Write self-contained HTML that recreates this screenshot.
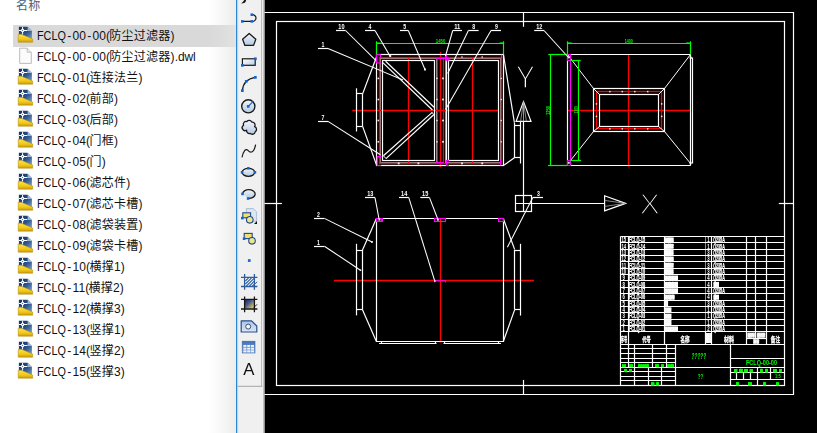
<!DOCTYPE html>
<html lang="zh-CN"><head><meta charset="utf-8"><title>FCLQ-00-00</title>
<style>
html,body{margin:0;padding:0;}
body{width:817px;height:433px;overflow:hidden;background:#fff;position:relative;font-family:"Liberation Sans","Noto Sans CJK SC",sans-serif;}
#list{position:absolute;left:0;top:0;width:236px;height:433px;background:#fff;overflow:hidden;}
#hdr{position:absolute;left:16px;top:-2px;font-size:12px;line-height:17px;color:#4c607a;letter-spacing:0.2px;}
.row{position:absolute;left:13px;width:223px;height:21px;line-height:21px;font-size:12px;color:#111;white-space:nowrap;}
.row.sel{background:#d9d9d9;height:21.5px}
.row span{position:absolute;left:24.4px;top:0.8px;letter-spacing:0.13px}
.row span i{font-style:normal;letter-spacing:0.25px}
.row span em{font-style:normal;letter-spacing:-0.15px}
.row span b{font-weight:normal;display:inline-block;transform:scaleX(0.9);transform-origin:0 50%;margin-right:-3.2px;letter-spacing:0}
.row span u{text-decoration:none;margin:0 1.2px 0 1.1px;letter-spacing:0}
.row span s{text-decoration:none;letter-spacing:-0.7px}
.ic{position:absolute;left:4px;top:0.2px;}
#fade{position:absolute;left:208px;top:0;width:28px;height:433px;background:linear-gradient(to right,rgba(229,229,229,0) 0%,rgba(229,229,229,0.3) 50%,rgba(229,229,229,0.74) 100%);}
#tb{position:absolute;left:236px;top:0;width:29px;height:433px;background:#f0f0f0;}
#cad{position:absolute;left:264.6px;top:0;width:553px;height:433px;background:#000;}
svg text{font-family:"Liberation Sans","Noto Sans CJK SC",sans-serif;}
#draw{position:absolute;left:0;top:0;will-change:transform;}
</style></head><body>
<svg width="0" height="0" style="position:absolute"><defs><linearGradient id="gb" x1="0" y1="0" x2="1" y2="1"><stop offset="0" stop-color="#142f5c"/><stop offset="0.55" stop-color="#2d558c"/><stop offset="1" stop-color="#7fa3cc"/></linearGradient><linearGradient id="gy" x1="0" y1="0" x2="0" y2="1"><stop offset="0" stop-color="#ffe14a"/><stop offset="0.6" stop-color="#f2c818"/><stop offset="1" stop-color="#c79a0a"/></linearGradient><symbol id="dwg" viewBox="0 0 17 18"><path d="M1.9 1.8 H10.6 L14.9 6 V14 H1.9 Z" fill="url(#gb)"/><path d="M10.6 1.8 L14.9 6 H10.6 Z" fill="#9db7d6"/><path d="M1.2 9.2 L4.4 9.2 L15.7 14 V17.2 H1.2 Z" fill="url(#gy)" stroke="#b08a10" stroke-width="0.5"/><g stroke="#fff" stroke-width="1" fill="none"><path d="M5.6 1.8 V9.4 M1.9 5.5 H10.4"/><circle cx="5.6" cy="5.5" r="1.3" fill="#fff"/><circle cx="5.6" cy="5.5" r="0.5" fill="#1c3a6c" stroke="none"/></g></symbol></defs></svg>
<div id="list"><div id="hdr">名称</div>
<div class="row sel" style="top:25px"><svg class="ic" width="17" height="18" viewBox="0 0 17 18"><use href="#dwg"/></svg><span><b>FCLQ</b><u>-</u>00<u>-</u>00<s>(</s><i>防尘过滤器</i>)</span></div>
<div class="row" style="top:46px"><svg class="ic" width="17" height="18" viewBox="0 0 17 18"><path d="M2.7 2.2 H10.2 L14.3 6.2 V17.4 H2.7 Z" fill="#fbfbfb" stroke="#b4b4b4" stroke-width="0.9"/><path d="M10.2 2.2 V6.2 H14.3" fill="#f0f0f0" stroke="#b4b4b4" stroke-width="0.8"/></svg><span><b>FCLQ</b><u>-</u>00<u>-</u>00<s>(</s><i>防尘过滤器</i>)<em>.dwl</em></span></div>
<div class="row" style="top:67px"><svg class="ic" width="17" height="18" viewBox="0 0 17 18"><use href="#dwg"/></svg><span><b>FCLQ</b><u>-</u>01<s>(</s><i>连接法兰</i>)</span></div>
<div class="row" style="top:88px"><svg class="ic" width="17" height="18" viewBox="0 0 17 18"><use href="#dwg"/></svg><span><b>FCLQ</b><u>-</u>02<s>(</s><i>前部</i>)</span></div>
<div class="row" style="top:109px"><svg class="ic" width="17" height="18" viewBox="0 0 17 18"><use href="#dwg"/></svg><span><b>FCLQ</b><u>-</u>03<s>(</s><i>后部</i>)</span></div>
<div class="row" style="top:130px"><svg class="ic" width="17" height="18" viewBox="0 0 17 18"><use href="#dwg"/></svg><span><b>FCLQ</b><u>-</u>04<s>(</s><i>门框</i>)</span></div>
<div class="row" style="top:151px"><svg class="ic" width="17" height="18" viewBox="0 0 17 18"><use href="#dwg"/></svg><span><b>FCLQ</b><u>-</u>05<s>(</s><i>门</i>)</span></div>
<div class="row" style="top:172px"><svg class="ic" width="17" height="18" viewBox="0 0 17 18"><use href="#dwg"/></svg><span><b>FCLQ</b><u>-</u>06<s>(</s><i>滤芯件</i>)</span></div>
<div class="row" style="top:193px"><svg class="ic" width="17" height="18" viewBox="0 0 17 18"><use href="#dwg"/></svg><span><b>FCLQ</b><u>-</u>07<s>(</s><i>滤芯卡槽</i>)</span></div>
<div class="row" style="top:214px"><svg class="ic" width="17" height="18" viewBox="0 0 17 18"><use href="#dwg"/></svg><span><b>FCLQ</b><u>-</u>08<s>(</s><i>滤袋装置</i>)</span></div>
<div class="row" style="top:235px"><svg class="ic" width="17" height="18" viewBox="0 0 17 18"><use href="#dwg"/></svg><span><b>FCLQ</b><u>-</u>09<s>(</s><i>滤袋卡槽</i>)</span></div>
<div class="row" style="top:256px"><svg class="ic" width="17" height="18" viewBox="0 0 17 18"><use href="#dwg"/></svg><span><b>FCLQ</b><u>-</u>10<s>(</s><i>横撑</i>1)</span></div>
<div class="row" style="top:277px"><svg class="ic" width="17" height="18" viewBox="0 0 17 18"><use href="#dwg"/></svg><span><b>FCLQ</b><u>-</u>11<s>(</s><i>横撑</i>2)</span></div>
<div class="row" style="top:298px"><svg class="ic" width="17" height="18" viewBox="0 0 17 18"><use href="#dwg"/></svg><span><b>FCLQ</b><u>-</u>12<s>(</s><i>横撑</i>3)</span></div>
<div class="row" style="top:319px"><svg class="ic" width="17" height="18" viewBox="0 0 17 18"><use href="#dwg"/></svg><span><b>FCLQ</b><u>-</u>13<s>(</s><i>竖撑</i>1)</span></div>
<div class="row" style="top:340px"><svg class="ic" width="17" height="18" viewBox="0 0 17 18"><use href="#dwg"/></svg><span><b>FCLQ</b><u>-</u>14<s>(</s><i>竖撑</i>2)</span></div>
<div class="row" style="top:361px"><svg class="ic" width="17" height="18" viewBox="0 0 17 18"><use href="#dwg"/></svg><span><b>FCLQ</b><u>-</u>15<s>(</s><i>竖撑</i>3)</span></div>
<div id="fade"></div>
</div>
<div id="tb"></div>
<div id="cad"></div>
<svg id="draw" width="817" height="433" viewBox="0 0 817 433">
<g id="toolbar">
<defs>
<linearGradient id="lb" x1="0" y1="0" x2="0" y2="1"><stop offset="0" stop-color="#f2f6fb"/><stop offset="1" stop-color="#b3c9e2"/></linearGradient>
<linearGradient id="lb2" x1="0" y1="0" x2="1" y2="1"><stop offset="0" stop-color="#ffffff"/><stop offset="1" stop-color="#b9cde6"/></linearGradient>
<linearGradient id="gr" x1="0" y1="0" x2="1" y2="1"><stop offset="0" stop-color="#16266e"/><stop offset="0.4" stop-color="#4a5a8a"/><stop offset="0.75" stop-color="#b9ae62"/><stop offset="1" stop-color="#f0e060"/></linearGradient>
<linearGradient id="rg" x1="0" y1="0" x2="0" y2="1"><stop offset="0" stop-color="#a9c3e8"/><stop offset="1" stop-color="#dbe6f5"/></linearGradient>
<linearGradient id="tbl" x1="0" y1="0" x2="0" y2="1"><stop offset="0" stop-color="#3f6fb5"/><stop offset="1" stop-color="#8fb0dc"/></linearGradient>
</defs>
<rect x="236" y="0" width="1.3" height="433" fill="#2b86d3"/>
<rect x="237.3" y="0" width="0.9" height="433" fill="#bcd7ee"/>
<rect x="261.3" y="0" width="1" height="386.6" fill="#a6a6a6"/>
<rect x="262.3" y="0" width="1.4" height="386.6" fill="#f4f4f4"/>
<rect x="237.5" y="385.8" width="24.8" height="1" fill="#a6a6a6"/>
<rect x="263.6" y="0" width="1.2" height="433" fill="#7a7a7a"/>
<!-- 1 partial arrow -->
<path d="M241.2 3.8 L244.4 0 L246.2 0 L245.2 2.4 Z" fill="#111"/>
<!-- 2 polyline -->
<path d="M242.3 21.4 H251.8 A3.6 3.4 0 1 0 251.8 14.7" fill="none" stroke="#1a1a1a" stroke-width="1.2"/>
<g fill="#1464d2"><rect x="241" y="20.1" width="2.6" height="2.6"/><rect x="250.5" y="20.1" width="2.6" height="2.6"/><rect x="250.5" y="13.4" width="2.6" height="2.6"/></g>
<!-- 3 polygon -->
<path d="M249.2 33.4 L255.8 39.2 L253.6 45.4 L244.9 45.4 L242.6 39.2 Z" fill="url(#lb)" stroke="#1a1a1a" stroke-width="1.3" stroke-linejoin="round"/>
<!-- 4 rectangle -->
<rect x="242.4" y="58.8" width="12.8" height="6.5" fill="url(#lb2)" stroke="#1a1a1a" stroke-width="1.2"/>
<g fill="#1464d2"><rect x="254" y="57.4" width="2.7" height="2.7"/><rect x="241" y="64" width="2.7" height="2.7"/></g>
<!-- 5 arc -->
<path d="M242.4 90.6 Q243.2 79.4 255.2 77.4" fill="none" stroke="#1a1a1a" stroke-width="1.2"/>
<g fill="#1464d2"><rect x="241" y="89.3" width="2.7" height="2.7"/><rect x="244.9" y="80" width="2.7" height="2.7"/><rect x="254" y="76" width="2.7" height="2.7"/></g>
<!-- 6 circle -->
<circle cx="248.3" cy="106.3" r="6.6" fill="url(#lb)" stroke="#1a1a1a" stroke-width="1.4"/>
<path d="M248.3 106.3 L253.2 101.4" stroke="#1464d2" stroke-width="1.2"/>
<rect x="246.9" y="105" width="2.7" height="2.7" fill="#1464d2"/>
<!-- 7 revcloud -->
<path d="M243.6 125.2 a2.6 2.6 0 0 1 3.2 -3.6 a3.1 3.1 0 0 1 5.2 0.6 a2.8 2.8 0 0 1 2.6 4.4 a2.9 2.9 0 0 1 0.6 5.2 a3 3 0 0 1 -5 1.6 a2.8 2.8 0 0 1 -3.6 -3.2 a2.8 2.8 0 0 1 -3 -5 Z" fill="url(#lb)" stroke="#1a1a1a" stroke-width="1.3" stroke-linejoin="round"/>
<!-- 8 spline -->
<path d="M242 157.4 C243.4 151 245.6 148 248 150.4 C250.6 153.4 254 153 255.6 144.6" fill="none" stroke="#1a1a1a" stroke-width="1.2"/>
<!-- 9 ellipse -->
<ellipse cx="248.4" cy="172.3" rx="6.3" ry="4" fill="url(#lb)" stroke="#1a1a1a" stroke-width="1.3"/>
<g fill="#1464d2"><rect x="240.8" y="171" width="2.6" height="2.6"/><rect x="253.6" y="171" width="2.6" height="2.6"/><rect x="247.1" y="167" width="2.6" height="2.6"/></g>
<!-- 10 ellipse arc -->
<path d="M242.6 193.6 A6.3 4.4 0 1 1 248.4 198.4" fill="url(#lb)" stroke="#1a1a1a" stroke-width="1.3"/>
<g fill="#1464d2"><rect x="241.2" y="192.6" width="2.6" height="2.6"/><rect x="246.8" y="197.2" width="2.6" height="2.6"/></g>
<!-- 11 insert block -->
<path d="M246.4 208.6 H253.2 L256.6 211.8 V221.2 H246.4 Z" fill="#dbe6f3" stroke="#9db4cf" stroke-width="0.8"/>
<rect x="242.8" y="212.8" width="7.8" height="5" fill="#f0e070" stroke="#1f4a8a" stroke-width="1.1"/>
<circle cx="249.8" cy="219.8" r="3.3" fill="#ece58a" stroke="#1f4a8a" stroke-width="1.1"/>
<rect x="241" y="216.8" width="2.6" height="2.6" fill="#1464d2"/>
<path d="M257 221 V224 H254 Z" fill="#111"/>
<!-- 12 make block -->
<rect x="244.2" y="233.4" width="8" height="5.2" fill="#f0e070" stroke="#1f4a8a" stroke-width="1.1"/>
<circle cx="252" cy="240.8" r="3.3" fill="#ece58a" stroke="#1f4a8a" stroke-width="1.1"/>
<rect x="242.8" y="237.4" width="2.6" height="2.6" fill="#1464d2"/>
<!-- 13 point -->
<rect x="247.9" y="259.2" width="2.7" height="2.7" fill="#1464d2"/>
<!-- 14 hatch -->
<rect x="245" y="277.8" width="9" height="8.4" fill="#fff"/>
<g stroke="#2c5c9e" stroke-width="1.1"><path d="M245.4 281 L248.6 277.8 M245.4 284 L251.6 277.8 M246.4 286 L254 278.4 M249.4 286 L254 281.4 M252.4 286 L254 284.4" /></g>
<g stroke="#2c5c9e" stroke-width="1.3"><path d="M244.6 274 V289.8 M254.4 274 V289.8 M241 277.4 H257.4 M241 286.5 H257.4"/></g>
<path d="M254.2 284.6 L257.2 281.8" stroke="#2c5c9e" stroke-width="1"/>
<!-- 15 gradient -->
<rect x="245" y="299.8" width="9" height="8.8" fill="url(#gr)"/>
<g stroke="#151515" stroke-width="1.3"><path d="M244.6 296.5 V312.3 M254.4 296.5 V312.3 M241 299.4 H257.4 M241 309 H257.4"/></g>
<path d="M253.8 307.6 L257 304.4" stroke="#151515" stroke-width="1"/>
<!-- 16 region -->
<path d="M241.2 320.8 H251.6 L256.8 326 V332 H241.2 Z" fill="url(#rg)" stroke="#2a4f8c" stroke-width="1.2" stroke-linejoin="round"/>
<circle cx="248.2" cy="326.6" r="2.5" fill="#f4f7fb" stroke="#3a4f70" stroke-width="1"/>
<!-- 17 table -->
<rect x="242.2" y="341.2" width="12.8" height="11.8" fill="url(#tbl)" stroke="#3865a8" stroke-width="0.6"/>
<g fill="#eef3fa"><rect x="243.4" y="345" width="3" height="1.9"/><rect x="247.2" y="345" width="3" height="1.9"/><rect x="251" y="345" width="3" height="1.9"/><rect x="243.4" y="347.7" width="3" height="1.9"/><rect x="247.2" y="347.7" width="3" height="1.9"/><rect x="251" y="347.7" width="3" height="1.9"/><rect x="243.4" y="350.4" width="3" height="1.9"/><rect x="247.2" y="350.4" width="3" height="1.9"/><rect x="251" y="350.4" width="3" height="1.9"/></g>
<!-- 18 text A -->
<text x="248.9" y="375.4" font-size="16.8" fill="#111" text-anchor="middle">A</text>

</g>
<g id="cadlines" stroke-linecap="butt">
<path d="M264.5 12.5 L793.5 12.5 L793.5 394.5 L264.5 394.5" fill="none" stroke="#fff" stroke-width="1.2"/>
<rect x="276.5" y="21.5" width="508.00" height="364.00" fill="none" stroke="#fff" stroke-width="1.2"/>
<line x1="523.5" y1="12.5" x2="523.5" y2="26.8" stroke="#fff" stroke-width="1.2"/>
<line x1="523.5" y1="379.9" x2="523.5" y2="394.4" stroke="#fff" stroke-width="1.2"/>
<line x1="264.5" y1="203.5" x2="281.9" y2="203.5" stroke="#fff" stroke-width="1.2"/>
<line x1="778.8" y1="203.5" x2="793.4" y2="203.5" stroke="#fff" stroke-width="1.2"/>
<rect x="380.5" y="58.5" width="56.00" height="104.00" fill="none" stroke="#fff" stroke-width="1" stroke-opacity="0.55"/>
<rect x="445.5" y="58.5" width="55.00" height="104.00" fill="none" stroke="#fff" stroke-width="1" stroke-opacity="0.55"/>
<rect x="379.5" y="57.5" width="122.00" height="106.00" fill="none" stroke="#ff0000" stroke-width="1.3"/>
<line x1="408.5" y1="57.5" x2="408.5" y2="163.5" stroke="#ff0000" stroke-width="1.3"/>
<line x1="472.5" y1="57.5" x2="472.5" y2="163.5" stroke="#ff0000" stroke-width="1.3"/>
<line x1="437.5" y1="57.5" x2="437.5" y2="163.5" stroke="#ff0000" stroke-width="1.1"/>
<line x1="443.5" y1="57.5" x2="443.5" y2="163.5" stroke="#ff0000" stroke-width="1.2"/>
<line x1="440.5" y1="51.9" x2="440.5" y2="167" stroke="#ff0000" stroke-width="1.3"/>
<line x1="352.2" y1="110.5" x2="499" y2="110.5" stroke="#ff0000" stroke-width="1.3"/>
<rect x="376.5" y="54.5" width="127.00" height="111.00" fill="none" stroke="#fff" stroke-width="1.2"/>
<rect x="382.5" y="60.5" width="52.00" height="100.00" fill="none" stroke="#fff" stroke-width="1.2"/>
<rect x="448.5" y="60.5" width="50.00" height="100.00" fill="none" stroke="#fff" stroke-width="1.2"/>
<line x1="446.5" y1="58" x2="446.5" y2="163" stroke="#fff" stroke-width="1.2"/>
<line x1="382.8" y1="62.6" x2="432.4" y2="110.0" stroke="#fff" stroke-width="1.2"/>
<line x1="385.6" y1="61.3" x2="434.1" y2="107.3" stroke="#fff" stroke-width="1.2"/>
<line x1="383.4" y1="155.8" x2="432.2" y2="112.4" stroke="#fff" stroke-width="1.2"/>
<line x1="386.0" y1="158.6" x2="433.7" y2="114.7" stroke="#fff" stroke-width="1.2"/>
<line x1="383.4" y1="155.8" x2="386.0" y2="158.6" stroke="#fff" stroke-width="1"/>
<line x1="432.2" y1="112.4" x2="433.7" y2="114.7" stroke="#fff" stroke-width="1"/>
<path d="M376.5 57 L362.6 93.9" fill="none" stroke="#fff" stroke-width="1.2"/>
<line x1="356.5" y1="88.3" x2="356.5" y2="131.5" stroke="#fff" stroke-width="1.2"/>
<line x1="362.5" y1="93.9" x2="362.5" y2="126.4" stroke="#fff" stroke-width="1.2"/>
<line x1="356.4" y1="93.5" x2="362.6" y2="93.5" stroke="#fff" stroke-width="1.2"/>
<line x1="356.4" y1="126.5" x2="362.6" y2="126.5" stroke="#fff" stroke-width="1.2"/>
<path d="M362.6 126.4 L376.5 164.9" fill="none" stroke="#fff" stroke-width="1.2"/>
<path d="M503.5 55 L514.4 122.7" fill="none" stroke="#fff" stroke-width="1.2"/>
<line x1="514.5" y1="122.7" x2="514.5" y2="158.0" stroke="#fff" stroke-width="1.2"/>
<line x1="520.5" y1="121.5" x2="520.5" y2="163.5" stroke="#fff" stroke-width="1.2"/>
<line x1="514.4" y1="125.5" x2="520.6" y2="125.5" stroke="#fff" stroke-width="1.2"/>
<line x1="514.4" y1="157.5" x2="520.6" y2="157.5" stroke="#fff" stroke-width="1.2"/>
<path d="M514.4 157.8 L504.6 164.7 L503.5 165.2" fill="none" stroke="#fff" stroke-width="1.2"/>
<rect x="377.5" y="77.60000000000001" width="1.60" height="1.60" fill="#fff" fill-opacity="0.9"/>
<rect x="436.3" y="77.7" width="1.40" height="1.40" fill="#fff" fill-opacity="0.9"/>
<rect x="442.1" y="77.5" width="1.80" height="1.80" fill="#fff" fill-opacity="0.9"/>
<rect x="500.55" y="77.75" width="1.30" height="1.30" fill="#fff" fill-opacity="0.9"/>
<rect x="377.5" y="98.7" width="1.60" height="1.60" fill="#fff" fill-opacity="0.9"/>
<rect x="436.3" y="98.8" width="1.40" height="1.40" fill="#fff" fill-opacity="0.9"/>
<rect x="442.1" y="98.6" width="1.80" height="1.80" fill="#fff" fill-opacity="0.9"/>
<rect x="500.55" y="98.85" width="1.30" height="1.30" fill="#fff" fill-opacity="0.9"/>
<rect x="377.5" y="119.7" width="1.60" height="1.60" fill="#fff" fill-opacity="0.9"/>
<rect x="436.3" y="119.8" width="1.40" height="1.40" fill="#fff" fill-opacity="0.9"/>
<rect x="442.1" y="119.6" width="1.80" height="1.80" fill="#fff" fill-opacity="0.9"/>
<rect x="500.55" y="119.85" width="1.30" height="1.30" fill="#fff" fill-opacity="0.9"/>
<rect x="377.5" y="141.0" width="1.60" height="1.60" fill="#fff" fill-opacity="0.9"/>
<rect x="436.3" y="141.10000000000002" width="1.40" height="1.40" fill="#fff" fill-opacity="0.9"/>
<rect x="442.1" y="140.9" width="1.80" height="1.80" fill="#fff" fill-opacity="0.9"/>
<rect x="500.55" y="141.15" width="1.30" height="1.30" fill="#fff" fill-opacity="0.9"/>
<rect x="397.8" y="162.5" width="1.80" height="1.80" fill="#fff" fill-opacity="0.9"/>
<rect x="417.5" y="162.5" width="1.80" height="1.80" fill="#fff" fill-opacity="0.9"/>
<rect x="461.1" y="162.5" width="1.80" height="1.80" fill="#fff" fill-opacity="0.9"/>
<rect x="481.3" y="162.5" width="1.80" height="1.80" fill="#fff" fill-opacity="0.9"/>
<rect x="461.3" y="56.3" width="1.40" height="1.40" fill="#fff" fill-opacity="0.9"/>
<rect x="481.5" y="56.3" width="1.40" height="1.40" fill="#fff" fill-opacity="0.9"/>
<rect x="389.2" y="55.0" width="2.00" height="2.00" fill="#fff" fill-opacity="0.9"/>
<path d="M380.5 54.5 L376.5 54.5 L376.5 63.0 L381.5 63.0" fill="none" stroke="#ff00ff" stroke-width="1.1"/>
<line x1="380.5" y1="54.5" x2="380.5" y2="58" stroke="#ff00ff" stroke-width="1"/>
<rect x="445" y="54.7" width="2.20" height="5.80" fill="#ff00ff"/>
<rect x="445" y="58" width="4.50" height="2.50" fill="#ff00ff"/>
<line x1="436.3" y1="58.5" x2="445" y2="58.5" stroke="#ff00ff" stroke-width="1.1"/>
<line x1="501.5" y1="54.7" x2="501.5" y2="58.5" stroke="#ff00ff" stroke-width="1.2"/>
<path d="M381.4 156.7 L377.3 156.7 L377.3 165.5 L381.2 165.5" fill="none" stroke="#ff00ff" stroke-width="1.2"/>
<line x1="436" y1="162.5" x2="443.6" y2="162.5" stroke="#ff00ff" stroke-width="1"/>
<line x1="446.5" y1="160.0" x2="446.5" y2="165.8" stroke="#ff00ff" stroke-width="1.3"/>
<line x1="446" y1="160.5" x2="449" y2="160.5" stroke="#ff00ff" stroke-width="1"/>
<line x1="446" y1="165.5" x2="449" y2="165.5" stroke="#ff00ff" stroke-width="1"/>
<line x1="500.5" y1="160" x2="500.5" y2="165.4" stroke="#ff00ff" stroke-width="1"/>
<line x1="376.5" y1="43.5" x2="503.6" y2="43.5" stroke="#00ff00" stroke-width="1.2"/>
<line x1="376.5" y1="41.3" x2="376.5" y2="54.4" stroke="#00ff00" stroke-width="1.2"/>
<line x1="503.5" y1="41.3" x2="503.5" y2="54.4" stroke="#00ff00" stroke-width="1.2"/>
<rect x="377" y="42.3" width="3.60" height="1.10" fill="#00ff00" fill-opacity="0.8"/>
<rect x="499.6" y="42.3" width="3.60" height="1.10" fill="#00ff00" fill-opacity="0.8"/>
<text x="440.6" y="43.2" font-size="5.4" fill="#00ff00" text-anchor="middle" textLength="9.5" lengthAdjust="spacingAndGlyphs" font-weight="bold">1450</text>
<line x1="628.5" y1="54.7" x2="628.5" y2="166.7" stroke="#ff0000" stroke-width="1.3"/>
<line x1="567.7" y1="110.5" x2="690.6" y2="110.5" stroke="#ff0000" stroke-width="1.3"/>
<rect x="596.5" y="91.5" width="65.00" height="37.00" fill="none" stroke="#ff0000" stroke-width="1.3"/>
<line x1="567.7" y1="54.5" x2="690.8" y2="54.5" stroke="#fff" stroke-width="1.2"/>
<line x1="567.7" y1="165.5" x2="690.8" y2="165.5" stroke="#fff" stroke-width="1.2"/>
<line x1="567.5" y1="54.7" x2="567.5" y2="165.3" stroke="#fff" stroke-width="1.2"/>
<line x1="690.5" y1="54.7" x2="690.5" y2="165.3" stroke="#fff" stroke-width="1.2"/>
<line x1="692.5" y1="57.5" x2="692.5" y2="163.5" stroke="#fff" stroke-width="1.2"/>
<rect x="593.5" y="88.5" width="71.00" height="43.00" fill="none" stroke="#fff" stroke-width="1.2"/>
<rect x="599.5" y="94.5" width="59.00" height="32.00" fill="none" stroke="#fff" stroke-width="1.2"/>
<path d="M567.5 54.5 L593.5 88.5 L599.5 94.5" fill="none" stroke="#fff" stroke-width="1.0"/>
<path d="M690.5 54.5 L664.5 88.5 L658.5 94.5" fill="none" stroke="#fff" stroke-width="1.0"/>
<path d="M658.5 126.5 L664.5 131.5 L690.5 163.5" fill="none" stroke="#fff" stroke-width="1.0"/>
<path d="M599.5 126.5 L593.5 131.5 L570.5 160.5" fill="none" stroke="#fff" stroke-width="1.0"/>
<rect x="609.15" y="90.85" width="1.50" height="1.50" fill="#fff" fill-opacity="0.9"/>
<rect x="609.15" y="128.15" width="1.50" height="1.50" fill="#fff" fill-opacity="0.9"/>
<rect x="621.55" y="90.85" width="1.50" height="1.50" fill="#fff" fill-opacity="0.9"/>
<rect x="621.55" y="128.15" width="1.50" height="1.50" fill="#fff" fill-opacity="0.9"/>
<rect x="634.05" y="90.85" width="1.50" height="1.50" fill="#fff" fill-opacity="0.9"/>
<rect x="634.05" y="128.15" width="1.50" height="1.50" fill="#fff" fill-opacity="0.9"/>
<rect x="646.95" y="90.85" width="1.50" height="1.50" fill="#fff" fill-opacity="0.9"/>
<rect x="646.95" y="128.15" width="1.50" height="1.50" fill="#fff" fill-opacity="0.9"/>
<rect x="595.75" y="103.15" width="1.50" height="1.50" fill="#fff" fill-opacity="0.9"/>
<rect x="660.95" y="103.15" width="1.50" height="1.50" fill="#fff" fill-opacity="0.9"/>
<rect x="595.75" y="115.65" width="1.50" height="1.50" fill="#fff" fill-opacity="0.9"/>
<rect x="660.95" y="115.65" width="1.50" height="1.50" fill="#fff" fill-opacity="0.9"/>
<line x1="570.5" y1="54.7" x2="570.5" y2="165.3" stroke="#ff00ff" stroke-width="1.2"/>
<rect x="567.5" y="54.5" width="3.00" height="6.00" fill="none" stroke="#ff00ff" stroke-width="1"/>
<rect x="567.5" y="160.5" width="3.00" height="5.00" fill="none" stroke="#ff00ff" stroke-width="1"/>
<rect x="567.9" y="56.5" width="1.80" height="1.80" fill="#fff" fill-opacity="0.9"/>
<rect x="567.9" y="161.9" width="1.80" height="1.80" fill="#fff" fill-opacity="0.9"/>
<rect x="689.6999999999999" y="56.699999999999996" width="2.20" height="2.20" fill="#fff" fill-opacity="0.9"/>
<rect x="689.5" y="161.9" width="2.20" height="2.20" fill="#fff" fill-opacity="0.9"/>
<line x1="567.4" y1="43.5" x2="690.2" y2="43.5" stroke="#00ff00" stroke-width="1.2"/>
<line x1="567.5" y1="41.3" x2="567.5" y2="54.2" stroke="#00ff00" stroke-width="1.2"/>
<line x1="690.5" y1="41.3" x2="690.5" y2="54.4" stroke="#00ff00" stroke-width="1.2"/>
<rect x="568" y="42.3" width="3.60" height="1.10" fill="#00ff00" fill-opacity="0.8"/>
<rect x="686.2" y="42.3" width="3.60" height="1.10" fill="#00ff00" fill-opacity="0.8"/>
<text x="628.7" y="43.2" font-size="5.4" fill="#00ff00" text-anchor="middle" textLength="8" lengthAdjust="spacingAndGlyphs" font-weight="bold">1400</text>
<line x1="548.3" y1="54.5" x2="567.4" y2="54.5" stroke="#00ff00" stroke-width="1.2"/>
<line x1="548.0" y1="165.5" x2="567.4" y2="165.5" stroke="#00ff00" stroke-width="1.2"/>
<line x1="550.5" y1="54.4" x2="550.5" y2="165.4" stroke="#00ff00" stroke-width="1.2"/>
<line x1="570.5" y1="60.5" x2="580.7" y2="60.5" stroke="#00ff00" stroke-width="1.2"/>
<line x1="570.5" y1="160.5" x2="581.0" y2="160.5" stroke="#00ff00" stroke-width="1.2"/>
<line x1="578.5" y1="60.3" x2="578.5" y2="160.2" stroke="#00ff00" stroke-width="1.2"/>
<text transform="translate(550.0,115) rotate(-90)" font-size="5.4" font-weight="bold" fill="#00ff00" textLength="9" lengthAdjust="spacingAndGlyphs">1250</text>
<text transform="translate(578.4,113.5) rotate(-90)" font-size="5.4" font-weight="bold" fill="#00ff00" textLength="7.5" lengthAdjust="spacingAndGlyphs">1160</text>
<line x1="440.5" y1="218.5" x2="440.5" y2="342.4" stroke="#ff0000" stroke-width="1.3"/>
<line x1="334" y1="280.5" x2="534" y2="280.5" stroke="#ff0000" stroke-width="1.3"/>
<path d="M376.5 341.5 L376.5 218.5 L503.5 218.5 L503.5 341.5 Z" fill="none" stroke="#fff" stroke-width="1.2"/>
<line x1="379" y1="343.5" x2="436.5" y2="343.5" stroke="#fff" stroke-width="1.2"/>
<line x1="443.5" y1="343.5" x2="501" y2="343.5" stroke="#fff" stroke-width="1.2"/>
<line x1="381.5" y1="341.5" x2="381.5" y2="343.5" stroke="#fff" stroke-width="1.2"/>
<line x1="498.5" y1="341.5" x2="498.5" y2="343.5" stroke="#fff" stroke-width="1.2"/>
<line x1="435.5" y1="341.5" x2="435.5" y2="343.5" stroke="#fff" stroke-width="1.2"/>
<line x1="444.5" y1="341.5" x2="444.5" y2="343.5" stroke="#fff" stroke-width="1.2"/>
<path d="M376.3 218.8 L362.5 250.0" fill="none" stroke="#fff" stroke-width="1.2"/>
<line x1="356.5" y1="243.8" x2="356.5" y2="315.4" stroke="#fff" stroke-width="1.2"/>
<line x1="362.5" y1="250" x2="362.5" y2="309.6" stroke="#fff" stroke-width="1.2"/>
<line x1="356.4" y1="250.5" x2="362.4" y2="250.5" stroke="#fff" stroke-width="1.2"/>
<line x1="356.4" y1="309.5" x2="362.4" y2="309.5" stroke="#fff" stroke-width="1.2"/>
<path d="M362.4 309.6 L376.3 341.2" fill="none" stroke="#fff" stroke-width="1.2"/>
<path d="M503.4 218.8 L514.7 249.6" fill="none" stroke="#fff" stroke-width="1.2"/>
<line x1="514.5" y1="250" x2="514.5" y2="309.6" stroke="#fff" stroke-width="1.2"/>
<line x1="520.5" y1="243.8" x2="520.5" y2="315.6" stroke="#fff" stroke-width="1.2"/>
<line x1="514.7" y1="250.5" x2="520.6" y2="250.5" stroke="#fff" stroke-width="1.2"/>
<line x1="514.7" y1="309.5" x2="520.6" y2="309.5" stroke="#fff" stroke-width="1.2"/>
<path d="M514.7 309.6 L503.4 341.2" fill="none" stroke="#fff" stroke-width="1.2"/>
<rect x="376.5" y="218.5" width="5.00" height="3.00" fill="none" stroke="#ff00ff" stroke-width="1.1"/>
<line x1="382.5" y1="218" x2="382.5" y2="222" stroke="#ff00ff" stroke-width="1"/>
<rect x="434.5" y="218.5" width="11.00" height="3.00" fill="none" stroke="#ff00ff" stroke-width="1.1"/>
<rect x="498.5" y="218.5" width="5.00" height="3.00" fill="none" stroke="#ff00ff" stroke-width="1.1"/>
<path d="M434.7 282.4 L434.7 280.8 L445.6 280.8 L445.6 282.4" fill="none" stroke="#ff00ff" stroke-width="1"/>
<rect x="378.4" y="218.6" width="2.00" height="2.00" fill="#fff" fill-opacity="0.9"/>
<rect x="437.1" y="218.9" width="1.80" height="1.80" fill="#fff" fill-opacity="0.9"/>
<rect x="434.0" y="280.2" width="1.60" height="1.60" fill="#fff" fill-opacity="0.9"/>
<rect x="515.5" y="195.5" width="16.00" height="16.00" fill="none" stroke="#fff" stroke-width="1.2"/>
<line x1="523.5" y1="121.3" x2="523.5" y2="211.6" stroke="#fff" stroke-width="1.2"/>
<line x1="515" y1="203.5" x2="604.6" y2="203.5" stroke="#fff" stroke-width="1.2"/>
<path d="M523.5 101.6 L516.1 121.3 L531.0 121.3 Z" fill="none" stroke="#fff" stroke-width="1.2"/>
<line x1="523.5" y1="101.6" x2="520.6" y2="121.3" stroke="#aaa" stroke-width="0.8"/>
<line x1="523.5" y1="101.6" x2="526.4" y2="121.3" stroke="#aaa" stroke-width="0.8"/>
<line x1="523.5" y1="101.6" x2="523.5" y2="121.3" stroke="#bbb" stroke-width="0.8"/>
<path d="M625.5 203.4 L604.6 195.8 L604.6 210.8 Z" fill="none" stroke="#fff" stroke-width="1.2"/>
<line x1="625.5" y1="203.4" x2="604.6" y2="200.4" stroke="#aaa" stroke-width="0.8"/>
<line x1="625.5" y1="203.4" x2="604.6" y2="206.4" stroke="#aaa" stroke-width="0.8"/>
<text x="525.4" y="88.3" font-size="31" fill="#fff" stroke="#000" stroke-width="1.5" paint-order="fill stroke" text-anchor="middle" textLength="19.3" lengthAdjust="spacingAndGlyphs">Y</text>
<text x="649.8" y="214.4" font-size="29.4" fill="#fff" stroke="#000" stroke-width="1.5" paint-order="fill stroke" text-anchor="middle" textLength="20.5" lengthAdjust="spacingAndGlyphs">X</text>
<text x="341.4" y="29.0" font-size="6.9" fill="#fff" text-anchor="middle" textLength="6.2" lengthAdjust="spacingAndGlyphs" font-weight="bold">10</text>
<line x1="336" y1="30.5" x2="345.6" y2="30.5" stroke="#fff" stroke-width="1.2"/>
<line x1="345.6" y1="30.5" x2="375.8" y2="60.4" stroke="#fff" stroke-width="1.05"/>
<text x="370" y="29.0" font-size="6.9" fill="#fff" text-anchor="middle" textLength="2.9" lengthAdjust="spacingAndGlyphs" font-weight="bold">4</text>
<line x1="365" y1="30.5" x2="375" y2="30.5" stroke="#fff" stroke-width="1.2"/>
<line x1="375" y1="30.5" x2="390" y2="56" stroke="#fff" stroke-width="1.05"/>
<text x="404.6" y="29.0" font-size="6.9" fill="#fff" text-anchor="middle" textLength="2.9" lengthAdjust="spacingAndGlyphs" font-weight="bold">5</text>
<line x1="400" y1="30.5" x2="408.3" y2="30.5" stroke="#fff" stroke-width="1.2"/>
<line x1="408.3" y1="30.5" x2="425" y2="69.5" stroke="#fff" stroke-width="1.05"/>
<rect x="424.0" y="68.5" width="2.00" height="2.00" fill="#fff" fill-opacity="0.9"/>
<text x="457.3" y="29.0" font-size="6.9" fill="#fff" text-anchor="middle" textLength="6.2" lengthAdjust="spacingAndGlyphs" font-weight="bold">11</text>
<line x1="452.7" y1="30.5" x2="462" y2="30.5" stroke="#fff" stroke-width="1.2"/>
<line x1="452.7" y1="30.5" x2="445.5" y2="56" stroke="#fff" stroke-width="1.05"/>
<text x="473.6" y="29.0" font-size="6.9" fill="#fff" text-anchor="middle" textLength="2.9" lengthAdjust="spacingAndGlyphs" font-weight="bold">8</text>
<line x1="468.4" y1="30.5" x2="478.6" y2="30.5" stroke="#fff" stroke-width="1.2"/>
<line x1="468.4" y1="30.5" x2="447.7" y2="73.6" stroke="#fff" stroke-width="1.05"/>
<text x="496.4" y="29.0" font-size="6.9" fill="#fff" text-anchor="middle" textLength="2.9" lengthAdjust="spacingAndGlyphs" font-weight="bold">9</text>
<line x1="491" y1="30.5" x2="501" y2="30.5" stroke="#fff" stroke-width="1.2"/>
<line x1="491" y1="30.5" x2="445.5" y2="109.4" stroke="#fff" stroke-width="1.05"/>
<text x="539.3" y="29.0" font-size="6.9" fill="#fff" text-anchor="middle" textLength="6.2" lengthAdjust="spacingAndGlyphs" font-weight="bold">12</text>
<line x1="534.2" y1="30.5" x2="544" y2="30.5" stroke="#fff" stroke-width="1.2"/>
<line x1="544" y1="30.5" x2="568" y2="57" stroke="#fff" stroke-width="1.05"/>
<text x="323" y="47.1" font-size="6.9" fill="#fff" text-anchor="middle" textLength="2.9" lengthAdjust="spacingAndGlyphs" font-weight="bold">1</text>
<line x1="318" y1="48.5" x2="328" y2="48.5" stroke="#fff" stroke-width="1.2"/>
<line x1="328" y1="48.6" x2="403" y2="80" stroke="#fff" stroke-width="1.05"/>
<text x="323" y="119.9" font-size="6.9" fill="#fff" text-anchor="middle" textLength="2.9" lengthAdjust="spacingAndGlyphs" font-weight="bold">7</text>
<line x1="318" y1="121.5" x2="328" y2="121.5" stroke="#fff" stroke-width="1.2"/>
<line x1="328" y1="121.4" x2="380.4" y2="154.7" stroke="#fff" stroke-width="1.05"/>
<text x="370.3" y="196.1" font-size="6.9" fill="#fff" text-anchor="middle" textLength="6.2" lengthAdjust="spacingAndGlyphs" font-weight="bold">13</text>
<line x1="365" y1="197.5" x2="375" y2="197.5" stroke="#fff" stroke-width="1.2"/>
<line x1="375" y1="197.6" x2="379" y2="218.8" stroke="#fff" stroke-width="1.05"/>
<text x="404.2" y="196.1" font-size="6.9" fill="#fff" text-anchor="middle" textLength="6.2" lengthAdjust="spacingAndGlyphs" font-weight="bold">14</text>
<line x1="399" y1="197.5" x2="408.8" y2="197.5" stroke="#fff" stroke-width="1.2"/>
<line x1="408.8" y1="197.6" x2="434.6" y2="280.5" stroke="#fff" stroke-width="1.05"/>
<text x="425.2" y="196.1" font-size="6.9" fill="#fff" text-anchor="middle" textLength="6.2" lengthAdjust="spacingAndGlyphs" font-weight="bold">15</text>
<line x1="420.3" y1="197.5" x2="429.5" y2="197.5" stroke="#fff" stroke-width="1.2"/>
<line x1="429.5" y1="197.6" x2="438" y2="219.7" stroke="#fff" stroke-width="1.05"/>
<text x="318.5" y="216.9" font-size="6.9" fill="#fff" text-anchor="middle" textLength="2.9" lengthAdjust="spacingAndGlyphs" font-weight="bold">2</text>
<line x1="314" y1="218.5" x2="324.4" y2="218.5" stroke="#fff" stroke-width="1.2"/>
<line x1="324.4" y1="218.4" x2="372" y2="242" stroke="#fff" stroke-width="1.05"/>
<rect x="371.1" y="241.1" width="1.80" height="1.80" fill="#fff" fill-opacity="0.9"/>
<text x="318.5" y="244.7" font-size="6.9" fill="#fff" text-anchor="middle" textLength="2.9" lengthAdjust="spacingAndGlyphs" font-weight="bold">1</text>
<line x1="314" y1="246.5" x2="324.4" y2="246.5" stroke="#fff" stroke-width="1.2"/>
<line x1="324.4" y1="246.2" x2="360.5" y2="270.3" stroke="#fff" stroke-width="1.05"/>
<rect x="359.75" y="269.55" width="1.50" height="1.50" fill="#fff" fill-opacity="0.9"/>
<text x="538.4" y="195.9" font-size="6.9" fill="#fff" text-anchor="middle" textLength="2.9" lengthAdjust="spacingAndGlyphs" font-weight="bold">3</text>
<line x1="532.8" y1="197.5" x2="543" y2="197.5" stroke="#fff" stroke-width="1.2"/>
<line x1="532.8" y1="197.4" x2="507.4" y2="247.3" stroke="#fff" stroke-width="1.05"/>
</g>
<g id="titleblock">
<line x1="620.5" y1="236.5" x2="784.5" y2="236.5" stroke="#fff" stroke-width="1.2"/>
<line x1="620.5" y1="242.5" x2="784.5" y2="242.5" stroke="#fff" stroke-width="1.2"/>
<line x1="620.5" y1="249.5" x2="784.5" y2="249.5" stroke="#fff" stroke-width="1.2"/>
<line x1="620.5" y1="255.5" x2="784.5" y2="255.5" stroke="#fff" stroke-width="1.2"/>
<line x1="620.5" y1="261.5" x2="784.5" y2="261.5" stroke="#fff" stroke-width="1.2"/>
<line x1="620.5" y1="268.5" x2="784.5" y2="268.5" stroke="#fff" stroke-width="1.2"/>
<line x1="620.5" y1="274.5" x2="784.5" y2="274.5" stroke="#fff" stroke-width="1.2"/>
<line x1="620.5" y1="280.5" x2="784.5" y2="280.5" stroke="#fff" stroke-width="1.2"/>
<line x1="620.5" y1="287.5" x2="784.5" y2="287.5" stroke="#fff" stroke-width="1.2"/>
<line x1="620.5" y1="293.5" x2="784.5" y2="293.5" stroke="#fff" stroke-width="1.2"/>
<line x1="620.5" y1="300.5" x2="784.5" y2="300.5" stroke="#fff" stroke-width="1.2"/>
<line x1="620.5" y1="306.5" x2="784.5" y2="306.5" stroke="#fff" stroke-width="1.2"/>
<line x1="620.5" y1="312.5" x2="784.5" y2="312.5" stroke="#fff" stroke-width="1.2"/>
<line x1="620.5" y1="319.5" x2="784.5" y2="319.5" stroke="#fff" stroke-width="1.2"/>
<line x1="620.5" y1="325.5" x2="784.5" y2="325.5" stroke="#fff" stroke-width="1.2"/>
<line x1="620.5" y1="331.5" x2="784.5" y2="331.5" stroke="#fff" stroke-width="1.2"/>
<line x1="620.5" y1="344.5" x2="784.5" y2="344.5" stroke="#fff" stroke-width="1.2"/>
<line x1="620.5" y1="236.45" x2="620.5" y2="344.2" stroke="#fff" stroke-width="1.2"/>
<line x1="628.5" y1="236.45" x2="628.5" y2="344.2" stroke="#fff" stroke-width="1.2"/>
<line x1="664.5" y1="236.45" x2="664.5" y2="344.2" stroke="#fff" stroke-width="1.2"/>
<line x1="705.5" y1="236.45" x2="705.5" y2="331.85" stroke="#fff" stroke-width="1" stroke-opacity="0.55"/>
<line x1="705.5" y1="331.85" x2="705.5" y2="344.2" stroke="#fff" stroke-width="1.2"/>
<line x1="711.5" y1="236.45" x2="711.5" y2="344.2" stroke="#fff" stroke-width="1.2"/>
<line x1="746.5" y1="236.45" x2="746.5" y2="344.2" stroke="#fff" stroke-width="1.2"/>
<line x1="755.5" y1="236.45" x2="755.5" y2="338.5" stroke="#fff" stroke-width="1.2"/>
<line x1="766.5" y1="236.45" x2="766.5" y2="344.2" stroke="#fff" stroke-width="1.2"/>
<line x1="746.5" y1="338.5" x2="766.2" y2="338.5" stroke="#fff" stroke-width="1.2"/>
<text x="623.8" y="242.14999999999998" font-size="6.3" fill="#fff" text-anchor="middle" textLength="4.8" lengthAdjust="spacingAndGlyphs" font-weight="bold">15</text>
<text x="628.9" y="242.14999999999998" font-size="6.3" fill="#fff" text-anchor="start" textLength="16.2" lengthAdjust="spacingAndGlyphs" font-weight="bold" stroke="#fff" stroke-width="0.25">FCLQ-15</text>
<rect x="664.6" y="237.35" width="9.00" height="5.10" fill="#fff" fill-opacity="0.96"/>
<text x="664.6" y="241.64999999999998" font-size="4.6" fill="#fff" text-anchor="start" textLength="9.0" lengthAdjust="spacingAndGlyphs" font-weight="bold">竖撑3</text>
<text x="708.4" y="242.14999999999998" font-size="6.3" fill="#fff" text-anchor="middle" textLength="2.4" lengthAdjust="spacingAndGlyphs" font-weight="bold">1</text>
<text x="713.2" y="242.14999999999998" font-size="6.3" fill="#fff" text-anchor="start" textLength="11.6" lengthAdjust="spacingAndGlyphs" font-weight="bold" stroke="#fff" stroke-width="0.25">Q235A</text>
<text x="623.8" y="248.51" font-size="6.3" fill="#fff" text-anchor="middle" textLength="4.8" lengthAdjust="spacingAndGlyphs" font-weight="bold">14</text>
<text x="628.9" y="248.51" font-size="6.3" fill="#fff" text-anchor="start" textLength="16.2" lengthAdjust="spacingAndGlyphs" font-weight="bold" stroke="#fff" stroke-width="0.25">FCLQ-14</text>
<rect x="664.6" y="243.71" width="9.00" height="5.10" fill="#fff" fill-opacity="0.96"/>
<text x="664.6" y="248.01" font-size="4.6" fill="#fff" text-anchor="start" textLength="9.0" lengthAdjust="spacingAndGlyphs" font-weight="bold">竖撑2</text>
<text x="708.4" y="248.51" font-size="6.3" fill="#fff" text-anchor="middle" textLength="2.4" lengthAdjust="spacingAndGlyphs" font-weight="bold">1</text>
<text x="713.2" y="248.51" font-size="6.3" fill="#fff" text-anchor="start" textLength="11.6" lengthAdjust="spacingAndGlyphs" font-weight="bold" stroke="#fff" stroke-width="0.25">Q235A</text>
<text x="623.8" y="254.86999999999998" font-size="6.3" fill="#fff" text-anchor="middle" textLength="4.8" lengthAdjust="spacingAndGlyphs" font-weight="bold">13</text>
<text x="628.9" y="254.86999999999998" font-size="6.3" fill="#fff" text-anchor="start" textLength="16.2" lengthAdjust="spacingAndGlyphs" font-weight="bold" stroke="#fff" stroke-width="0.25">FCLQ-13</text>
<rect x="664.6" y="250.07" width="9.00" height="5.10" fill="#fff" fill-opacity="0.96"/>
<text x="664.6" y="254.36999999999998" font-size="4.6" fill="#fff" text-anchor="start" textLength="9.0" lengthAdjust="spacingAndGlyphs" font-weight="bold">竖撑1</text>
<text x="708.4" y="254.86999999999998" font-size="6.3" fill="#fff" text-anchor="middle" textLength="2.4" lengthAdjust="spacingAndGlyphs" font-weight="bold">3</text>
<text x="713.2" y="254.86999999999998" font-size="6.3" fill="#fff" text-anchor="start" textLength="11.6" lengthAdjust="spacingAndGlyphs" font-weight="bold" stroke="#fff" stroke-width="0.25">Q235A</text>
<text x="623.8" y="261.23" font-size="6.3" fill="#fff" text-anchor="middle" textLength="4.8" lengthAdjust="spacingAndGlyphs" font-weight="bold">12</text>
<text x="628.9" y="261.23" font-size="6.3" fill="#fff" text-anchor="start" textLength="16.2" lengthAdjust="spacingAndGlyphs" font-weight="bold" stroke="#fff" stroke-width="0.25">FCLQ-12</text>
<rect x="664.6" y="256.43" width="9.00" height="5.10" fill="#fff" fill-opacity="0.96"/>
<text x="664.6" y="260.73" font-size="4.6" fill="#fff" text-anchor="start" textLength="9.0" lengthAdjust="spacingAndGlyphs" font-weight="bold">横撑3</text>
<text x="708.4" y="261.23" font-size="6.3" fill="#fff" text-anchor="middle" textLength="2.4" lengthAdjust="spacingAndGlyphs" font-weight="bold">3</text>
<text x="713.2" y="261.23" font-size="6.3" fill="#fff" text-anchor="start" textLength="11.6" lengthAdjust="spacingAndGlyphs" font-weight="bold" stroke="#fff" stroke-width="0.25">Q235A</text>
<text x="623.8" y="267.59" font-size="6.3" fill="#fff" text-anchor="middle" textLength="4.8" lengthAdjust="spacingAndGlyphs" font-weight="bold">11</text>
<text x="628.9" y="267.59" font-size="6.3" fill="#fff" text-anchor="start" textLength="16.2" lengthAdjust="spacingAndGlyphs" font-weight="bold" stroke="#fff" stroke-width="0.25">FCLQ-11</text>
<rect x="664.6" y="262.78999999999996" width="9.00" height="5.10" fill="#fff" fill-opacity="0.96"/>
<text x="664.6" y="267.09" font-size="4.6" fill="#fff" text-anchor="start" textLength="9.0" lengthAdjust="spacingAndGlyphs" font-weight="bold">横撑2</text>
<text x="708.4" y="267.59" font-size="6.3" fill="#fff" text-anchor="middle" textLength="2.4" lengthAdjust="spacingAndGlyphs" font-weight="bold">3</text>
<text x="713.2" y="267.59" font-size="6.3" fill="#fff" text-anchor="start" textLength="11.6" lengthAdjust="spacingAndGlyphs" font-weight="bold" stroke="#fff" stroke-width="0.25">Q235A</text>
<text x="623.8" y="273.95" font-size="6.3" fill="#fff" text-anchor="middle" textLength="4.8" lengthAdjust="spacingAndGlyphs" font-weight="bold">10</text>
<text x="628.9" y="273.95" font-size="6.3" fill="#fff" text-anchor="start" textLength="16.2" lengthAdjust="spacingAndGlyphs" font-weight="bold" stroke="#fff" stroke-width="0.25">FCLQ-10</text>
<rect x="664.6" y="269.15" width="9.00" height="5.10" fill="#fff" fill-opacity="0.96"/>
<text x="664.6" y="273.45" font-size="4.6" fill="#fff" text-anchor="start" textLength="9.0" lengthAdjust="spacingAndGlyphs" font-weight="bold">横撑1</text>
<text x="708.4" y="273.95" font-size="6.3" fill="#fff" text-anchor="middle" textLength="2.4" lengthAdjust="spacingAndGlyphs" font-weight="bold">3</text>
<text x="713.2" y="273.95" font-size="6.3" fill="#fff" text-anchor="start" textLength="11.6" lengthAdjust="spacingAndGlyphs" font-weight="bold" stroke="#fff" stroke-width="0.25">Q235A</text>
<text x="623.8" y="280.31" font-size="6.3" fill="#fff" text-anchor="middle" textLength="2.4" lengthAdjust="spacingAndGlyphs" font-weight="bold">9</text>
<text x="628.9" y="280.31" font-size="6.3" fill="#fff" text-anchor="start" textLength="16.2" lengthAdjust="spacingAndGlyphs" font-weight="bold" stroke="#fff" stroke-width="0.25">FCLQ-09</text>
<rect x="664.6" y="275.51" width="13.40" height="5.10" fill="#fff" fill-opacity="0.96"/>
<text x="664.6" y="279.81" font-size="4.6" fill="#fff" text-anchor="start" textLength="13.4" lengthAdjust="spacingAndGlyphs" font-weight="bold">滤袋卡槽</text>
<text x="708.4" y="280.31" font-size="6.3" fill="#fff" text-anchor="middle" textLength="2.4" lengthAdjust="spacingAndGlyphs" font-weight="bold">4</text>
<text x="713.2" y="280.31" font-size="6.3" fill="#fff" text-anchor="start" textLength="11.6" lengthAdjust="spacingAndGlyphs" font-weight="bold" stroke="#fff" stroke-width="0.25">Q235A</text>
<text x="623.8" y="286.66999999999996" font-size="6.3" fill="#fff" text-anchor="middle" textLength="2.4" lengthAdjust="spacingAndGlyphs" font-weight="bold">8</text>
<text x="628.9" y="286.66999999999996" font-size="6.3" fill="#fff" text-anchor="start" textLength="16.2" lengthAdjust="spacingAndGlyphs" font-weight="bold" stroke="#fff" stroke-width="0.25">FCLQ-08</text>
<rect x="664.6" y="281.86999999999995" width="13.40" height="5.10" fill="#fff" fill-opacity="0.96"/>
<text x="664.6" y="286.16999999999996" font-size="4.6" fill="#fff" text-anchor="start" textLength="13.4" lengthAdjust="spacingAndGlyphs" font-weight="bold">滤袋装置</text>
<text x="708.4" y="286.66999999999996" font-size="6.3" fill="#fff" text-anchor="middle" textLength="2.4" lengthAdjust="spacingAndGlyphs" font-weight="bold">4</text>
<rect x="713.4" y="281.96999999999997" width="5.60" height="5.00" fill="#fff" fill-opacity="0.96"/>
<text x="713.4" y="286.16999999999996" font-size="4.6" fill="#fff" text-anchor="start" textLength="5.6" lengthAdjust="spacingAndGlyphs" font-weight="bold">组件</text>
<text x="623.8" y="293.03" font-size="6.3" fill="#fff" text-anchor="middle" textLength="2.4" lengthAdjust="spacingAndGlyphs" font-weight="bold">7</text>
<text x="628.9" y="293.03" font-size="6.3" fill="#fff" text-anchor="start" textLength="16.2" lengthAdjust="spacingAndGlyphs" font-weight="bold" stroke="#fff" stroke-width="0.25">FCLQ-07</text>
<rect x="664.6" y="288.22999999999996" width="13.40" height="5.10" fill="#fff" fill-opacity="0.96"/>
<text x="664.6" y="292.53" font-size="4.6" fill="#fff" text-anchor="start" textLength="13.4" lengthAdjust="spacingAndGlyphs" font-weight="bold">滤芯卡槽</text>
<text x="708.4" y="293.03" font-size="6.3" fill="#fff" text-anchor="middle" textLength="2.4" lengthAdjust="spacingAndGlyphs" font-weight="bold">4</text>
<text x="713.2" y="293.03" font-size="6.3" fill="#fff" text-anchor="start" textLength="11.6" lengthAdjust="spacingAndGlyphs" font-weight="bold" stroke="#fff" stroke-width="0.25">Q235A</text>
<text x="623.8" y="299.39" font-size="6.3" fill="#fff" text-anchor="middle" textLength="2.4" lengthAdjust="spacingAndGlyphs" font-weight="bold">6</text>
<text x="628.9" y="299.39" font-size="6.3" fill="#fff" text-anchor="start" textLength="16.2" lengthAdjust="spacingAndGlyphs" font-weight="bold" stroke="#fff" stroke-width="0.25">FCLQ-06</text>
<rect x="664.6" y="294.59" width="10.10" height="5.10" fill="#fff" fill-opacity="0.96"/>
<text x="664.6" y="298.89" font-size="4.6" fill="#fff" text-anchor="start" textLength="10.1" lengthAdjust="spacingAndGlyphs" font-weight="bold">滤芯件</text>
<text x="708.4" y="299.39" font-size="6.3" fill="#fff" text-anchor="middle" textLength="2.4" lengthAdjust="spacingAndGlyphs" font-weight="bold">4</text>
<rect x="713.4" y="294.69" width="5.60" height="5.00" fill="#fff" fill-opacity="0.96"/>
<text x="713.4" y="298.89" font-size="4.6" fill="#fff" text-anchor="start" textLength="5.6" lengthAdjust="spacingAndGlyphs" font-weight="bold">组件</text>
<text x="623.8" y="305.75" font-size="6.3" fill="#fff" text-anchor="middle" textLength="2.4" lengthAdjust="spacingAndGlyphs" font-weight="bold">5</text>
<text x="628.9" y="305.75" font-size="6.3" fill="#fff" text-anchor="start" textLength="16.2" lengthAdjust="spacingAndGlyphs" font-weight="bold" stroke="#fff" stroke-width="0.25">FCLQ-05</text>
<rect x="664.6" y="300.95" width="3.50" height="5.10" fill="#fff" fill-opacity="0.96"/>
<text x="664.6" y="305.25" font-size="4.6" fill="#fff" text-anchor="start" textLength="3.5" lengthAdjust="spacingAndGlyphs" font-weight="bold">门</text>
<text x="708.4" y="305.75" font-size="6.3" fill="#fff" text-anchor="middle" textLength="2.4" lengthAdjust="spacingAndGlyphs" font-weight="bold">3</text>
<text x="713.2" y="305.75" font-size="6.3" fill="#fff" text-anchor="start" textLength="11.6" lengthAdjust="spacingAndGlyphs" font-weight="bold" stroke="#fff" stroke-width="0.25">Q235A</text>
<text x="623.8" y="312.10999999999996" font-size="6.3" fill="#fff" text-anchor="middle" textLength="2.4" lengthAdjust="spacingAndGlyphs" font-weight="bold">4</text>
<text x="628.9" y="312.10999999999996" font-size="6.3" fill="#fff" text-anchor="start" textLength="16.2" lengthAdjust="spacingAndGlyphs" font-weight="bold" stroke="#fff" stroke-width="0.25">FCLQ-04</text>
<rect x="664.6" y="307.30999999999995" width="6.80" height="5.10" fill="#fff" fill-opacity="0.96"/>
<text x="664.6" y="311.60999999999996" font-size="4.6" fill="#fff" text-anchor="start" textLength="6.8" lengthAdjust="spacingAndGlyphs" font-weight="bold">门框</text>
<text x="708.4" y="312.10999999999996" font-size="6.3" fill="#fff" text-anchor="middle" textLength="2.4" lengthAdjust="spacingAndGlyphs" font-weight="bold">1</text>
<text x="713.2" y="312.10999999999996" font-size="6.3" fill="#fff" text-anchor="start" textLength="11.6" lengthAdjust="spacingAndGlyphs" font-weight="bold" stroke="#fff" stroke-width="0.25">Q235A</text>
<text x="623.8" y="318.46999999999997" font-size="6.3" fill="#fff" text-anchor="middle" textLength="2.4" lengthAdjust="spacingAndGlyphs" font-weight="bold">3</text>
<text x="628.9" y="318.46999999999997" font-size="6.3" fill="#fff" text-anchor="start" textLength="16.2" lengthAdjust="spacingAndGlyphs" font-weight="bold" stroke="#fff" stroke-width="0.25">FCLQ-03</text>
<rect x="664.6" y="313.66999999999996" width="6.80" height="5.10" fill="#fff" fill-opacity="0.96"/>
<text x="664.6" y="317.96999999999997" font-size="4.6" fill="#fff" text-anchor="start" textLength="6.8" lengthAdjust="spacingAndGlyphs" font-weight="bold">后部</text>
<text x="708.4" y="318.46999999999997" font-size="6.3" fill="#fff" text-anchor="middle" textLength="2.4" lengthAdjust="spacingAndGlyphs" font-weight="bold">1</text>
<text x="713.2" y="318.46999999999997" font-size="6.3" fill="#fff" text-anchor="start" textLength="11.6" lengthAdjust="spacingAndGlyphs" font-weight="bold" stroke="#fff" stroke-width="0.25">Q235A</text>
<text x="623.8" y="324.83" font-size="6.3" fill="#fff" text-anchor="middle" textLength="2.4" lengthAdjust="spacingAndGlyphs" font-weight="bold">2</text>
<text x="628.9" y="324.83" font-size="6.3" fill="#fff" text-anchor="start" textLength="16.2" lengthAdjust="spacingAndGlyphs" font-weight="bold" stroke="#fff" stroke-width="0.25">FCLQ-02</text>
<rect x="664.6" y="320.03" width="6.80" height="5.10" fill="#fff" fill-opacity="0.96"/>
<text x="664.6" y="324.33" font-size="4.6" fill="#fff" text-anchor="start" textLength="6.8" lengthAdjust="spacingAndGlyphs" font-weight="bold">前部</text>
<text x="708.4" y="324.83" font-size="6.3" fill="#fff" text-anchor="middle" textLength="2.4" lengthAdjust="spacingAndGlyphs" font-weight="bold">1</text>
<text x="713.2" y="324.83" font-size="6.3" fill="#fff" text-anchor="start" textLength="11.6" lengthAdjust="spacingAndGlyphs" font-weight="bold" stroke="#fff" stroke-width="0.25">Q235A</text>
<text x="623.8" y="331.19" font-size="6.3" fill="#fff" text-anchor="middle" textLength="2.4" lengthAdjust="spacingAndGlyphs" font-weight="bold">1</text>
<text x="628.9" y="331.19" font-size="6.3" fill="#fff" text-anchor="start" textLength="16.2" lengthAdjust="spacingAndGlyphs" font-weight="bold" stroke="#fff" stroke-width="0.25">FCLQ-01</text>
<rect x="664.6" y="326.39" width="13.40" height="5.10" fill="#fff" fill-opacity="0.96"/>
<text x="664.6" y="330.69" font-size="4.6" fill="#fff" text-anchor="start" textLength="13.4" lengthAdjust="spacingAndGlyphs" font-weight="bold">连接法兰</text>
<text x="708.4" y="331.19" font-size="6.3" fill="#fff" text-anchor="middle" textLength="2.4" lengthAdjust="spacingAndGlyphs" font-weight="bold">2</text>
<text x="713.2" y="331.19" font-size="6.3" fill="#fff" text-anchor="start" textLength="11.6" lengthAdjust="spacingAndGlyphs" font-weight="bold" stroke="#fff" stroke-width="0.25">Q235A</text>
<text x="624.0" y="341.6" font-size="7" fill="#fff" text-anchor="middle" textLength="6.4" lengthAdjust="spacingAndGlyphs" font-weight="bold" stroke="#fff" stroke-width="0.35">序号</text>
<text x="646.5" y="341.8" font-size="7" fill="#fff" text-anchor="middle" textLength="8.4" lengthAdjust="spacingAndGlyphs" font-weight="bold" stroke="#fff" stroke-width="0.35">代号</text>
<text x="684.9" y="341.8" font-size="7" fill="#fff" text-anchor="middle" textLength="9.0" lengthAdjust="spacingAndGlyphs" font-weight="bold" stroke="#fff" stroke-width="0.35">名称</text>
<rect x="705.8" y="333.0" width="5.20" height="10.00" fill="#fff" fill-opacity="0.95"/>
<text transform="translate(706.2,334) scale(0.75,1)" font-size="4.6" fill="#fff" font-weight="bold"><tspan x="0" dy="4">数</tspan><tspan x="0" dy="4.4">量</tspan></text>
<text x="729.0" y="341.8" font-size="7" fill="#fff" text-anchor="middle" textLength="10.0" lengthAdjust="spacingAndGlyphs" font-weight="bold" stroke="#fff" stroke-width="0.35">材料</text>
<rect x="747.3" y="332.6" width="7.60" height="5.00" fill="#fff" fill-opacity="0.9"/>
<text x="747.3" y="337.2" font-size="4.4" fill="#fff" text-anchor="start" textLength="7.6" lengthAdjust="spacingAndGlyphs" font-weight="bold">单件</text>
<rect x="756.7" y="332.6" width="8.70" height="5.00" fill="#fff" fill-opacity="0.9"/>
<text x="756.7" y="337.2" font-size="4.4" fill="#fff" text-anchor="start" textLength="8.6" lengthAdjust="spacingAndGlyphs" font-weight="bold">总计</text>
<rect x="753.2" y="339.4" width="6.00" height="4.20" fill="#fff" fill-opacity="0.9"/>
<text x="753.2" y="343.3" font-size="4.2" fill="#fff" text-anchor="start" textLength="6" lengthAdjust="spacingAndGlyphs" font-weight="bold">重量</text>
<text x="775.4" y="341.8" font-size="7" fill="#fff" text-anchor="middle" textLength="9.2" lengthAdjust="spacingAndGlyphs" font-weight="bold" stroke="#fff" stroke-width="0.35">备注</text>
<line x1="620.5" y1="348.5" x2="675.5" y2="348.5" stroke="#fff" stroke-width="1.2"/>
<line x1="620.5" y1="353.5" x2="675.5" y2="353.5" stroke="#fff" stroke-width="1.2"/>
<line x1="620.5" y1="358.5" x2="675.5" y2="358.5" stroke="#fff" stroke-width="1.2"/>
<line x1="620.5" y1="362.5" x2="675.5" y2="362.5" stroke="#fff" stroke-width="1.2"/>
<line x1="620.5" y1="367.5" x2="675.5" y2="367.5" stroke="#fff" stroke-width="1.2"/>
<line x1="620.5" y1="371.5" x2="675.5" y2="371.5" stroke="#fff" stroke-width="1.2"/>
<line x1="620.5" y1="376.5" x2="675.5" y2="376.5" stroke="#fff" stroke-width="1.2"/>
<line x1="620.5" y1="380.5" x2="675.5" y2="380.5" stroke="#fff" stroke-width="1.2"/>
<line x1="628.5" y1="344.2" x2="628.5" y2="367.4" stroke="#fff" stroke-width="1.2"/>
<line x1="634.5" y1="344.2" x2="634.5" y2="367.4" stroke="#fff" stroke-width="1.2"/>
<line x1="652.5" y1="344.2" x2="652.5" y2="367.4" stroke="#fff" stroke-width="1.2"/>
<line x1="666.5" y1="344.2" x2="666.5" y2="367.4" stroke="#fff" stroke-width="1.2"/>
<line x1="634.5" y1="367.4" x2="634.5" y2="385.3" stroke="#fff" stroke-width="1.2"/>
<line x1="648.5" y1="367.4" x2="648.5" y2="385.3" stroke="#fff" stroke-width="1.2"/>
<line x1="661.5" y1="367.4" x2="661.5" y2="385.3" stroke="#fff" stroke-width="1.2"/>
<line x1="620.5" y1="344.2" x2="620.5" y2="385.3" stroke="#fff" stroke-width="1.2"/>
<line x1="675.5" y1="344.2" x2="675.5" y2="385.3" stroke="#fff" stroke-width="1.2"/>
<line x1="730.5" y1="344.2" x2="730.5" y2="385.3" stroke="#fff" stroke-width="1.2"/>
<line x1="730.4" y1="358.5" x2="784.5" y2="358.5" stroke="#fff" stroke-width="1.2"/>
<line x1="675.5" y1="367.5" x2="784.5" y2="367.5" stroke="#fff" stroke-width="1.2"/>
<line x1="730.4" y1="372.5" x2="784.5" y2="372.5" stroke="#fff" stroke-width="1.2"/>
<line x1="730.4" y1="379.5" x2="784.5" y2="379.5" stroke="#fff" stroke-width="1.2"/>
<line x1="757.5" y1="367.4" x2="757.5" y2="385.3" stroke="#fff" stroke-width="1.2"/>
<line x1="770.5" y1="367.4" x2="770.5" y2="379.5" stroke="#fff" stroke-width="1.2"/>
<line x1="736.5" y1="372.5" x2="736.5" y2="379.5" stroke="#fff" stroke-width="1.2"/>
<line x1="743.5" y1="372.5" x2="743.5" y2="379.5" stroke="#fff" stroke-width="1.2"/>
<line x1="750.5" y1="372.5" x2="750.5" y2="379.5" stroke="#fff" stroke-width="1.2"/>
<rect x="622" y="364.2" width="4.00" height="2.80" fill="#00ff00" fill-opacity="0.95"/>
<text x="622" y="366.5" font-size="3.2000000000000113" fill="#00ff00" text-anchor="start" textLength="4" lengthAdjust="spacingAndGlyphs" font-weight="bold">标记</text>
<rect x="629" y="364.2" width="4.00" height="2.80" fill="#00ff00" fill-opacity="0.95"/>
<text x="629" y="366.5" font-size="3.2000000000000113" fill="#00ff00" text-anchor="start" textLength="4" lengthAdjust="spacingAndGlyphs" font-weight="bold">处数</text>
<rect x="638" y="364.2" width="11.00" height="2.80" fill="#00ff00" fill-opacity="0.95"/>
<text x="638" y="366.5" font-size="3.2000000000000113" fill="#00ff00" text-anchor="start" textLength="11" lengthAdjust="spacingAndGlyphs" font-weight="bold">更改文件号</text>
<rect x="655" y="364.2" width="4.00" height="2.80" fill="#00ff00" fill-opacity="0.95"/>
<text x="655" y="366.5" font-size="3.2000000000000113" fill="#00ff00" text-anchor="start" textLength="4" lengthAdjust="spacingAndGlyphs" font-weight="bold">签字</text>
<rect x="661" y="364.2" width="3.00" height="2.80" fill="#00ff00" fill-opacity="0.95"/>
<text x="661" y="366.5" font-size="3.2000000000000113" fill="#00ff00" text-anchor="start" textLength="3" lengthAdjust="spacingAndGlyphs" font-weight="bold">日</text>
<rect x="667" y="364.2" width="7.00" height="2.80" fill="#00ff00" fill-opacity="0.95"/>
<text x="667" y="366.5" font-size="3.2000000000000113" fill="#00ff00" text-anchor="start" textLength="7" lengthAdjust="spacingAndGlyphs" font-weight="bold">期</text>
<rect x="624" y="369.0" width="3.00" height="3.00" fill="#00ff00" fill-opacity="0.95"/>
<text x="624" y="371.5" font-size="3.4" fill="#00ff00" text-anchor="start" textLength="3" lengthAdjust="spacingAndGlyphs" font-weight="bold">设</text>
<rect x="629" y="369.0" width="3.00" height="3.00" fill="#00ff00" fill-opacity="0.95"/>
<text x="629" y="371.5" font-size="3.4" fill="#00ff00" text-anchor="start" textLength="3" lengthAdjust="spacingAndGlyphs" font-weight="bold">计</text>
<rect x="651" y="382.2" width="3.50" height="3.60" fill="#00ff00" fill-opacity="0.95"/>
<text x="651" y="385.3" font-size="3.6" fill="#00ff00" text-anchor="start" textLength="3.5" lengthAdjust="spacingAndGlyphs" font-weight="bold">批</text>
<rect x="656" y="382.2" width="3.00" height="3.60" fill="#00ff00" fill-opacity="0.95"/>
<text x="656" y="385.3" font-size="3.6" fill="#00ff00" text-anchor="start" textLength="3" lengthAdjust="spacingAndGlyphs" font-weight="bold">准</text>
<rect x="734" y="369.0" width="3.50" height="3.50" fill="#00ff00" fill-opacity="0.95"/>
<text x="734" y="372.0" font-size="3.6" fill="#00ff00" text-anchor="start" textLength="3.5" lengthAdjust="spacingAndGlyphs" font-weight="bold">阶</text>
<rect x="739" y="369.0" width="4.00" height="3.50" fill="#00ff00" fill-opacity="0.95"/>
<text x="739" y="372.0" font-size="3.6" fill="#00ff00" text-anchor="start" textLength="4" lengthAdjust="spacingAndGlyphs" font-weight="bold">段</text>
<rect x="744" y="369.0" width="4.00" height="3.50" fill="#00ff00" fill-opacity="0.95"/>
<text x="744" y="372.0" font-size="3.6" fill="#00ff00" text-anchor="start" textLength="4" lengthAdjust="spacingAndGlyphs" font-weight="bold">标</text>
<rect x="749.5" y="369.0" width="3.50" height="3.50" fill="#00ff00" fill-opacity="0.95"/>
<text x="749.5" y="372.0" font-size="3.6" fill="#00ff00" text-anchor="start" textLength="3.5" lengthAdjust="spacingAndGlyphs" font-weight="bold">记</text>
<rect x="760" y="369.0" width="3.00" height="3.50" fill="#00ff00" fill-opacity="0.95"/>
<text x="760" y="372.0" font-size="3.6" fill="#00ff00" text-anchor="start" textLength="3" lengthAdjust="spacingAndGlyphs" font-weight="bold">重</text>
<rect x="765" y="369.0" width="3.00" height="3.50" fill="#00ff00" fill-opacity="0.95"/>
<text x="765" y="372.0" font-size="3.6" fill="#00ff00" text-anchor="start" textLength="3" lengthAdjust="spacingAndGlyphs" font-weight="bold">量</text>
<rect x="773" y="369.0" width="4.00" height="3.50" fill="#00ff00" fill-opacity="0.95"/>
<text x="773" y="372.0" font-size="3.6" fill="#00ff00" text-anchor="start" textLength="4" lengthAdjust="spacingAndGlyphs" font-weight="bold">比</text>
<rect x="779" y="369.0" width="3.00" height="3.50" fill="#00ff00" fill-opacity="0.95"/>
<text x="779" y="372.0" font-size="3.6" fill="#00ff00" text-anchor="start" textLength="3" lengthAdjust="spacingAndGlyphs" font-weight="bold">例</text>
<rect x="736" y="382.2" width="3.00" height="3.40" fill="#00ff00" fill-opacity="0.95"/>
<text x="736" y="385.1" font-size="3.6" fill="#00ff00" text-anchor="start" textLength="3" lengthAdjust="spacingAndGlyphs" font-weight="bold">共</text>
<rect x="748" y="382.2" width="4.00" height="3.40" fill="#00ff00" fill-opacity="0.95"/>
<text x="748" y="385.1" font-size="3.6" fill="#00ff00" text-anchor="start" textLength="4" lengthAdjust="spacingAndGlyphs" font-weight="bold">张</text>
<rect x="763" y="382.2" width="3.00" height="3.40" fill="#00ff00" fill-opacity="0.95"/>
<text x="763" y="385.1" font-size="3.6" fill="#00ff00" text-anchor="start" textLength="3" lengthAdjust="spacingAndGlyphs" font-weight="bold">第</text>
<rect x="776" y="382.2" width="3.00" height="3.40" fill="#00ff00" fill-opacity="0.95"/>
<text x="776" y="385.1" font-size="3.6" fill="#00ff00" text-anchor="start" textLength="3" lengthAdjust="spacingAndGlyphs" font-weight="bold">张</text>
<text x="775.0" y="377.7" font-size="4.6" fill="#00ff00" text-anchor="start" textLength="5.8" lengthAdjust="spacingAndGlyphs" font-weight="bold">1:5</text>
<text x="746.0" y="365.4" font-size="6.8" fill="#00ff00" text-anchor="start" textLength="31" lengthAdjust="spacingAndGlyphs" font-weight="bold">FCLQ-00-00</text>
<text x="691.6" y="359.2" font-size="8.2" fill="#00ff00" text-anchor="start" textLength="14.5" lengthAdjust="spacingAndGlyphs" font-style="italic" font-weight="bold">?????</text>
<text x="697.8" y="379.0" font-size="6.6" fill="#00ff00" text-anchor="start" textLength="5.6" lengthAdjust="spacingAndGlyphs" font-weight="bold">??</text>
</g>
</svg>
</body></html>
